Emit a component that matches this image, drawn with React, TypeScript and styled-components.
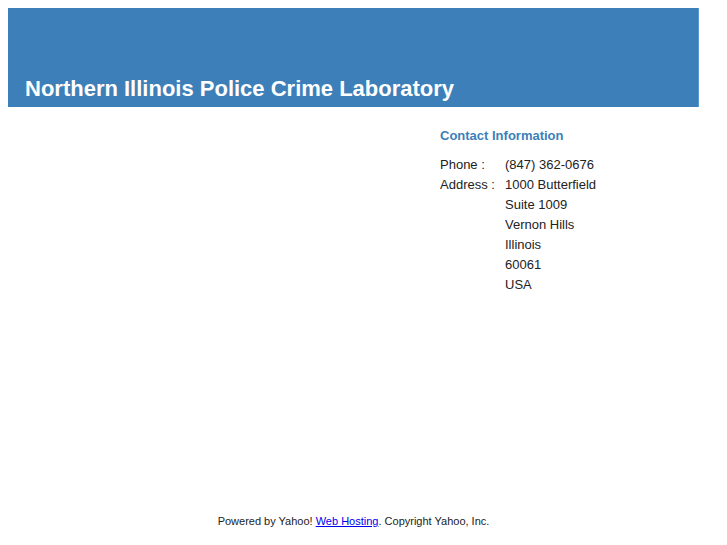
import React from "react";
import styled, { createGlobalStyle } from "styled-components";

const Global = createGlobalStyle`
  body {
    margin: 8px;
    background: #ffffff;
    font-family: "Liberation Sans", Arial, sans-serif;
  }
`;

const Page = styled.div`
  width: 691px;
  display: flex;
  flex-direction: column;
`;

const Header = styled.header`
  height: 99px;
  background: #3d7fb9;
  box-sizing: border-box;
  display: flex;
  align-items: flex-end;
  padding: 0 0 5px 17px;
  border-right: 1px solid #5a9ad0;
`;

const Title = styled.h1`
  margin: 0;
  color: #ffffff;
  font-size: 22px;
  font-weight: bold;
  line-height: 26px;
`;

const Body = styled.div`
  display: flex;
  justify-content: flex-end;
  height: 407px;
`;

const Contact = styled.section`
  width: 259px;
  padding-top: 20px;
`;

const Heading = styled.h2`
  margin: 0 0 10px;
  color: #3d7fb9;
  font-size: 13px;
  font-weight: bold;
  line-height: 18px;
`;

const Row = styled.div`
  display: grid;
  grid-template-columns: 65px 1fr;
  font-size: 13px;
  line-height: 20px;
  color: #222222;
`;

const Label = styled.span``;

const Values = styled.div`
  display: flex;
  flex-direction: column;
`;

const Footer = styled.footer`
  text-align: center;
  font-size: 11px;
  color: #222222;
  line-height: 14px;
  a {
    color: #0000ee;
    text-decoration: underline;
  }
`;

export default function App() {
  return (
    <>
      <Global />
      <Page>
        <Header>
          <Title>Northern Illinois Police Crime Laboratory</Title>
        </Header>
        <Body>
          <Contact>
            <Heading>Contact Information</Heading>
            <Row>
              <Label>Phone :</Label>
              <Values>
                <span>(847) 362-0676</span>
              </Values>
            </Row>
            <Row>
              <Label>Address :</Label>
              <Values>
                <span>1000 Butterfield</span>
                <span>Suite 1009</span>
                <span>Vernon Hills</span>
                <span>Illinois</span>
                <span>60061</span>
                <span>USA</span>
              </Values>
            </Row>
          </Contact>
        </Body>
        <Footer>
          Powered by Yahoo! <a href="#">Web Hosting</a>. Copyright Yahoo, Inc.
        </Footer>
      </Page>
    </>
  );
}
